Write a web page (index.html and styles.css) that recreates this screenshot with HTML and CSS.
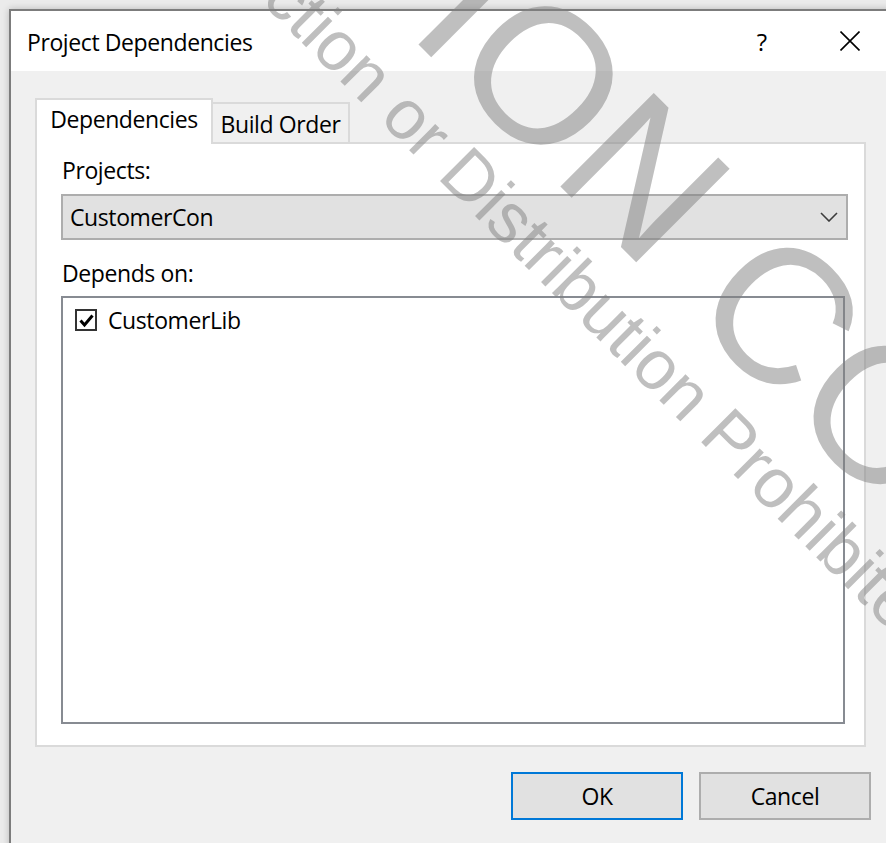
FILE: index.html
```html
<!DOCTYPE html>
<html lang="en">
<head>
<meta charset="utf-8">
<title>Project Dependencies</title>
<link rel="stylesheet" href="styles.css">
</head>
<body>
<div class="window">
  <header class="titlebar">
    <span class="title">Project Dependencies</span>
    <button class="cap-btn help" type="button">?</button>
    <button class="cap-btn close" type="button" aria-label="Close">
      <svg width="20" height="20" viewBox="0 0 20 20"><path d="M0.5 0.5 L19.5 19.5 M19.5 0.5 L0.5 19.5" stroke="#000" stroke-width="1.6" fill="none"/></svg>
    </button>
  </header>

  <main class="client">
    <div class="tabs">
      <div class="tab active">Dependencies</div>
      <div class="tab">Build Order</div>
    </div>

    <section class="panel">
      <div class="label label-first">Projects:</div>
      <div class="combo">
        <span class="combo-text">CustomerCon</span>
        <svg class="chevron" width="18" height="10" viewBox="0 0 18 10"><path d="M1 1 L9 9 L17 1" stroke="#3c3c3c" stroke-width="1.6" fill="none"/></svg>
      </div>

      <div class="label label-second">Depends on:</div>
      <div class="list">
        <div class="item">
          <span class="checkbox">
            <svg width="17" height="17" viewBox="0 0 17 17"><path d="M2.5 8.5 L6.5 13 L14.5 3.5" stroke="#000" stroke-width="3" fill="none"/></svg>
          </span>
          <span>CustomerLib</span>
        </div>
      </div>
    </section>

    <div class="buttons">
      <button class="btn btn-default" type="button">OK</button>
      <button class="btn" type="button">Cancel</button>
    </div>
  </main>
</div>

<!-- translucent stamp printed across the whole screen -->
<svg class="stamp" width="886" height="843" viewBox="0 0 886 843" aria-hidden="true">
  <g class="stamp-big" transform="translate(406 32) rotate(45)">
    <text x="0" y="0" text-anchor="end">EVALUAT</text>
    <text x="0" y="0">ION COPY</text>
  </g>
  <g class="stamp-small" transform="translate(436 177) rotate(45)">
    <text x="-19.5" y="0" text-anchor="end">Unauthorized Reproduction or</text>
    <text x="0" y="0">Distribution Prohibited</text>
  </g>
</svg>
</body>
</html>
```

FILE: styles.css
```css
html, body {
  margin: 0;
  padding: 0;
}

body {
  width: 886px;
  height: 843px;
  overflow: hidden;
  background: #ebebeb;
  font-family: "Open Sans", "Noto Sans", sans-serif;
  font-size: 23px;
  color: #000;
  position: relative;
}

button {
  font: inherit;
  color: inherit;
}

/* dialog frame */
.window {
  margin: 9px 0 0 9px;
  width: 879px;
  border: 2px solid #7c7c7c;
  border-bottom: none;
  box-shadow: 0 0 7px rgba(0, 0, 0, 0.22);
  background: #f0f0f0;
}

.titlebar {
  height: 60px;
  background: #fff;
  display: flex;
  align-items: center;
}

.title {
  flex: 1;
  padding-left: 16px;
  letter-spacing: -0.4px;
  margin-top: 1px;
}

.cap-btn {
  border: none;
  background: transparent;
  padding: 0;
  height: 60px;
  display: flex;
  align-items: center;
  justify-content: center;
}

.help {
  width: 88px;
  font-size: 24px;
}

.close {
  width: 84px;
  padding-left: 4px;
}

/* client area */
.client {
  height: 800px;
  padding: 27px 19px 0 24px;
  box-sizing: border-box;
}

.tabs {
  display: flex;
  align-items: flex-end;
  height: 44px;
}

.tab {
  box-sizing: border-box;
  display: flex;
  align-items: center;
  justify-content: center;
  border: 2px solid #dadada;
  border-bottom: none;
  letter-spacing: -0.4px;
}

.tab.active {
  width: 178px;
  height: 46px;
  margin-bottom: -2px;
  padding-bottom: 7px;
  background: #fff;
  position: relative;
  z-index: 1;
}

.tab:not(.active) {
  width: 137px;
  height: 40px;
  border-left: none;
  background: #f0f0f0;
  padding-top: 2px;
}

.panel {
  box-sizing: border-box;
  width: 831px;
  height: 605px;
  background: #fff;
  border: 2px solid #dadada;
  padding: 0 0 0 24px;
}

.label {
  line-height: 30px;
  padding-left: 1px;
  letter-spacing: -0.4px;
}

.label-first {
  margin-top: 11px;
}

.label-second {
  margin-top: 18px;
}

.combo {
  box-sizing: border-box;
  margin-top: 9px;
  width: 787px;
  height: 46px;
  background: #e1e1e1;
  border: 2px solid #adadad;
  display: flex;
  align-items: center;
  padding: 0 8px 0 7px;
}

.combo-text {
  flex: 1;
  letter-spacing: -0.4px;
}

.chevron {
  display: block;
}

.list {
  box-sizing: border-box;
  margin-top: 8px;
  width: 784px;
  height: 428px;
  border: 2px solid #878b92;
  background: #fff;
}

.item {
  display: flex;
  align-items: center;
  gap: 11px;
  padding: 6px 0 0 12px;
  letter-spacing: -0.4px;
}

.checkbox {
  box-sizing: border-box;
  width: 22px;
  height: 22px;
  border: 2px solid #333;
  background: #fff;
  display: flex;
  align-items: center;
  justify-content: center;
}

.checkbox svg {
  display: block;
}

/* OK / Cancel row */
.buttons {
  display: flex;
  justify-content: flex-end;
  gap: 16px;
  margin-top: 25px;
}

.btn {
  box-sizing: border-box;
  width: 172px;
  height: 48px;
  background: #e1e1e1;
  border: 2px solid #adadad;
  padding: 0;
  letter-spacing: -0.4px;
}

.btn-default {
  border-color: #0078d7;
}

/* stamp overlay */
.stamp {
  position: absolute;
  top: 0;
  left: 0;
  pointer-events: none;
}

.stamp text {
  font-family: "Liberation Sans", Arial, sans-serif;
  fill: rgba(128, 128, 128, 0.5);
}

.stamp-big text {
  font-size: 192px;
}

.stamp-small text {
  font-size: 70px;
}
```
